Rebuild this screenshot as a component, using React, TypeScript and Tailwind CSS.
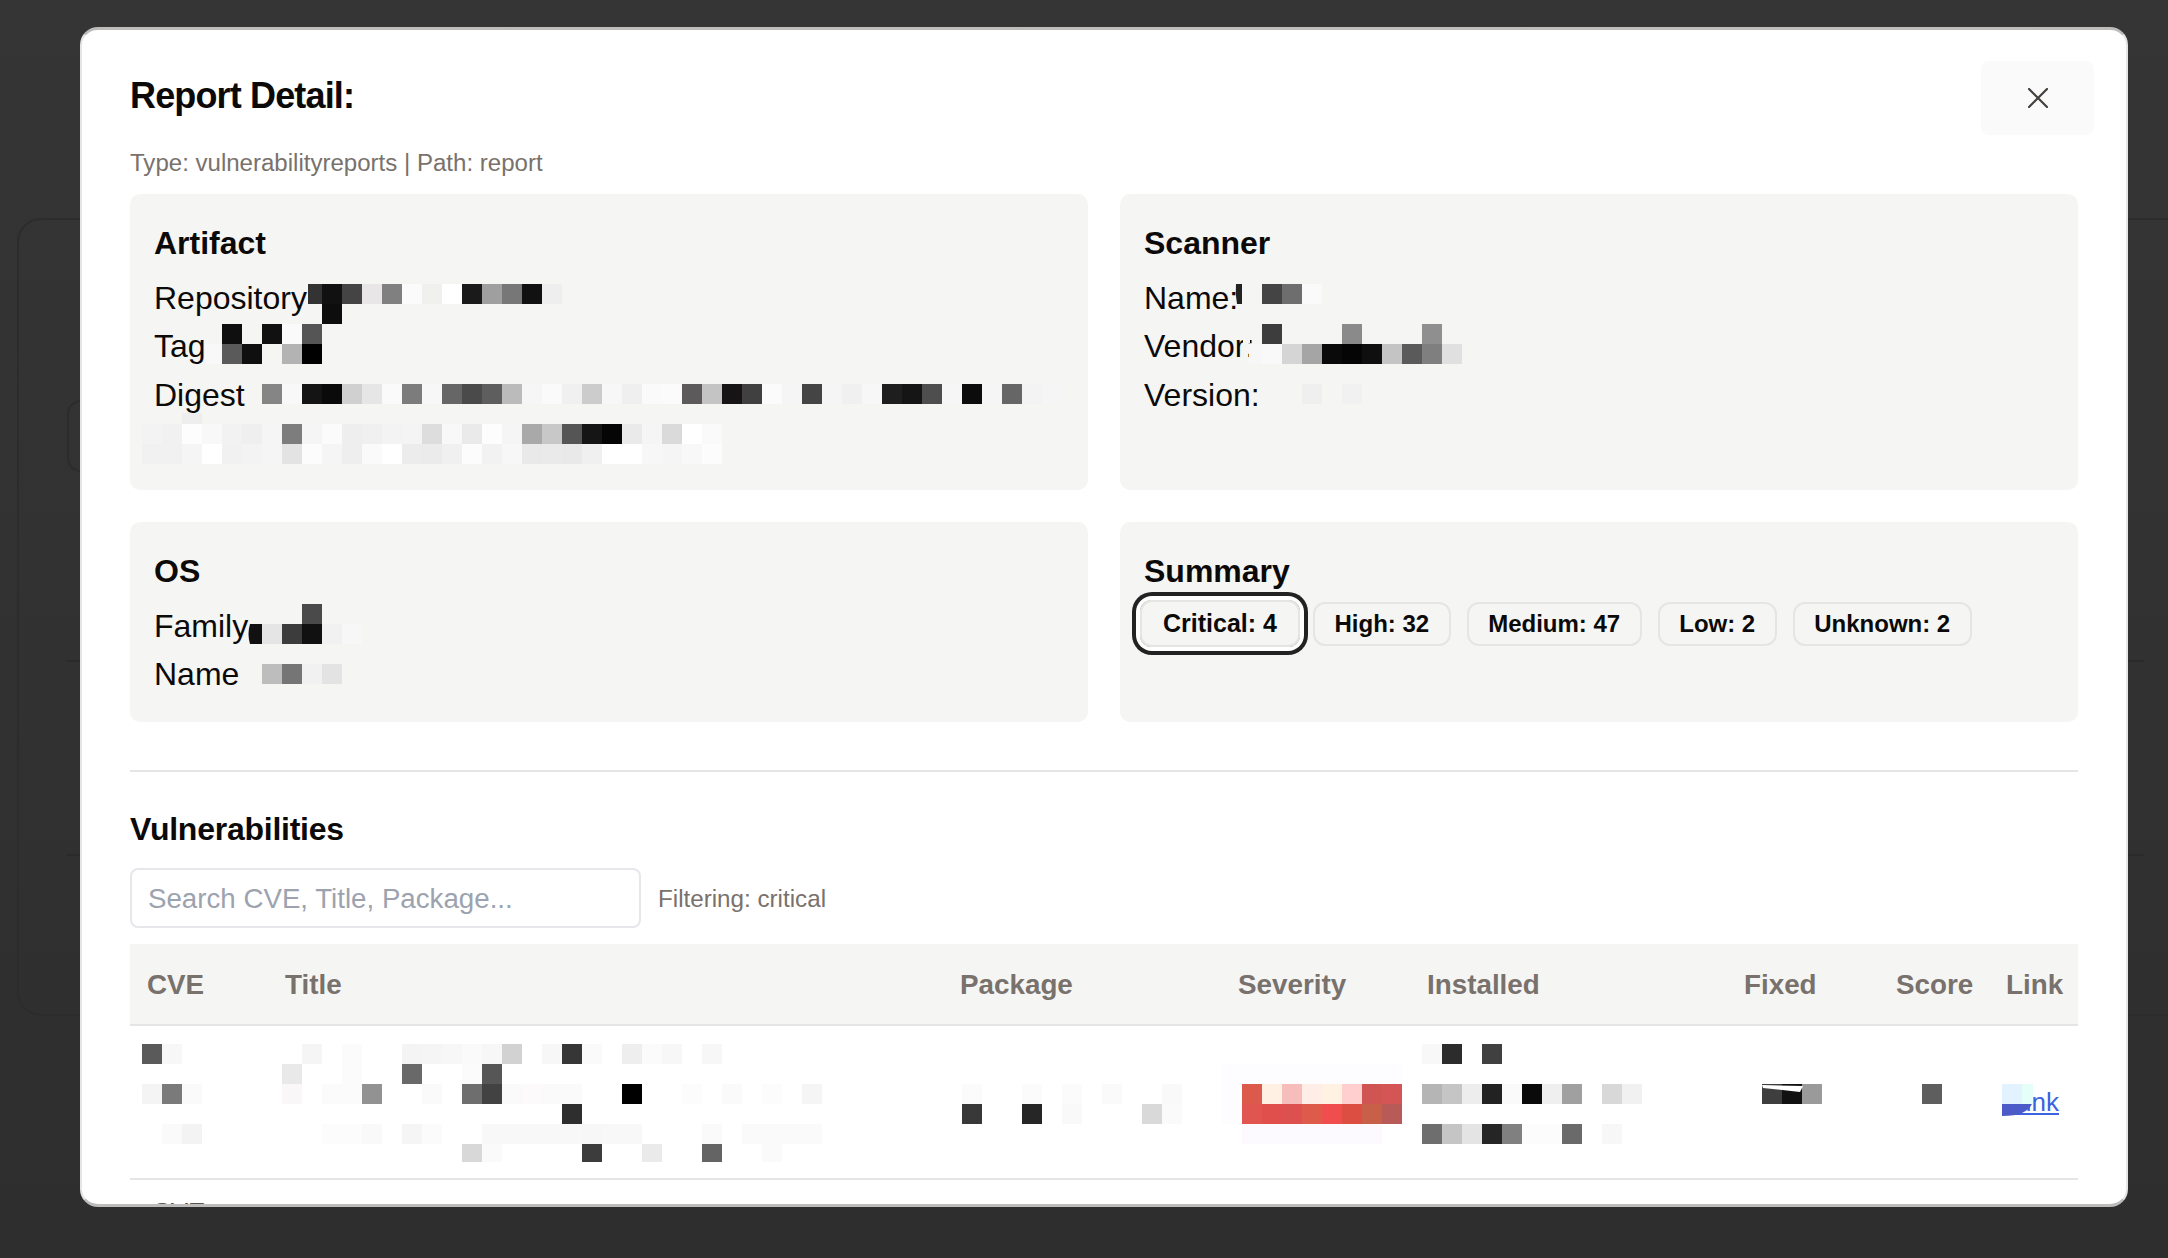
import React from "react";

type Row = [number, Array<[number, string]>];

// Redaction mosaic: 20px tiles lying over the sensitive values.
const mosaic: Row[] = [
  [284, [[322,"#111"],[342,"#444"],[362,"#e8e6e6"],[382,"#808080"],[402,"#fbfbfb"],[422,"#f0f0ef"],[442,"#fff"],[462,"#1a1a1a"],[482,"#9f9f9f"],[502,"#777"],[522,"#111"],[542,"#eee"],
    [1262,"#444"],[1282,"#6e6e6e"],[1302,"#fafafa"]]],
  [304, [[322,"#0d0d0d"]]],
  [324, [[222,"#0f0f0f"],[262,"#111"],[282,"#fafafa"],[302,"#555"],[1262,"#3d3d3d"],[1342,"#8a8a8a"],[1422,"#8f8f8f"]]],
  [344, [[222,"#5a5a5a"],[242,"#0f0f0f"],[282,"#b3b3b3"],[302,"#000"],
    [1262,"#f9f9f9"],[1282,"#d5d5d5"],[1302,"#a5a5a5"],[1322,"#0a0a0a"],[1342,"#050505"],[1362,"#0f0f0f"],[1382,"#c4c4c4"],[1402,"#5a5a5a"],[1422,"#7f7f7f"],[1442,"#e0e0e0"]]],
  [384, [[262,"#858585"],[282,"#f8f8f8"],[302,"#141414"],[322,"#0a0a0a"],[342,"#d0d0d0"],[362,"#e6e6e6"],[382,"#fafafa"],[402,"#7c7c7c"],[422,"#f7f7f7"],[442,"#666"],[462,"#4a4a4a"],[482,"#5e5e5e"],[502,"#bbb"],[522,"#f6f6f6"],[542,"#fafafa"],[562,"#f1f0f0"],[582,"#ccc"],[602,"#f7f7f7"],[622,"#efefef"],[642,"#fafafa"],[662,"#fbfbfb"],[682,"#5c5a5a"],[702,"#c4c4c4"],[722,"#161414"],[742,"#404040"],[762,"#fbfbfb"],[782,"#f5f5f5"],[802,"#444"],[822,"#f5f5f5"],[842,"#f0f0f0"],[862,"#f7f7f7"],[882,"#1e1e1e"],[902,"#151515"],[922,"#4e4e4e"],[942,"#f6f6f6"],[962,"#0c0c0c"],[982,"#f5f5f5"],[1002,"#666"],[1022,"#f3f3f3"],[1042,"#f5f5f5"],
    [1302,"#efefef"],[1342,"#f1f1f1"]]],
  [424, [[142,"#f3f3f3"],[162,"#f1f1f1"],[182,"#fdfdfd"],[202,"#f8f8f8"],[222,"#f2f2f2"],[242,"#f0efef"],[262,"#f5f5f5"],[282,"#7d7d7d"],[302,"#f5f5f5"],[322,"#fbfbfb"],[342,"#eee"],[362,"#f0f0f0"],[382,"#f3f3f3"],[402,"#f4f4f4"],[422,"#ddd"],[442,"#f8f8f8"],[462,"#eaeaea"],[482,"#fdfdfd"],[502,"#f5f5f5"],[522,"#a9a9a9"],[542,"#c8c8c8"],[562,"#555"],[582,"#151515"],[602,"#050505"],[622,"#eaeaea"],[642,"#f5f5f5"],[662,"#dadada"],[682,"#fff"],[702,"#fafafa"]]],
  [444, [[142,"#f1f1f1"],[162,"#f1f1f1"],[182,"#f5f5f5"],[202,"#fff"],[222,"#f1f1f1"],[242,"#f3f3f3"],[262,"#f5f5f5"],[282,"#e3e3e3"],[302,"#fcfcfc"],[322,"#f5f5f5"],[342,"#eee"],[362,"#fafafa"],[382,"#fff"],[402,"#ececec"],[422,"#ebebeb"],[442,"#f0f0f0"],[462,"#fcfcfc"],[482,"#f2f2f2"],[502,"#f7f7f7"],[522,"#e9e9e9"],[542,"#eaeaea"],[562,"#e9e9e9"],[582,"#f0f0f0"],[602,"#fff"],[622,"#fff"],[642,"#f7f7f7"],[662,"#f5f5f5"],[682,"#f8f8f8"],[702,"#fcfcfc"]]],
  [604, [[302,"#4a4a4a"]]],
  [624, [[262,"#e5e5e5"],[282,"#3c3c3c"],[302,"#111"],[322,"#f1f1f1"],[342,"#f7f7f7"]]],
  [664, [[262,"#bdbdbd"],[282,"#757575"],[302,"#f1f1f1"],[322,"#e3e3e3"]]],
  [1044, [[142,"#5a5a5a"],[162,"#f7f7f7"],[302,"#f5f5f5"],[342,"#fbfbfb"],[402,"#f4f4f4"],[422,"#f5f5f5"],[442,"#f7f7f7"],[462,"#fafafa"],[482,"#f7f7f7"],[502,"#d2d2d2"],[542,"#f7f7f7"],[562,"#363636"],[582,"#fafafa"],[622,"#eee"],[642,"#fbfbfb"],[662,"#f7f7f7"],[702,"#f7f7f7"],
    [1422,"#f8f8f8"],[1442,"#2c2c2c"],[1482,"#404040"]]],
  [1064, [[282,"#e9e9e9"],[342,"#fbfbfb"],[402,"#696969"],[462,"#fbfbfb"],[482,"#565656"],
    [1222,"#fdfcff"],[1242,"#fdfcff"],[1262,"#fdfcff"],[1282,"#fdfcff"],[1302,"#fdfcff"],[1322,"#fdfcff"],[1342,"#fdfcff"],[1362,"#fdfcff"],[1382,"#fdfcff"]]],
  [1084, [[142,"#f4f4f4"],[162,"#7a7a7a"],[182,"#fafafa"],[282,"#faf7f8"],[322,"#fbfbfb"],[342,"#fbfbfb"],[362,"#929292"],[422,"#fafafa"],[462,"#6e6e6e"],[482,"#424242"],[502,"#fafafa"],[522,"#fcfafa"],[542,"#fafafa"],[562,"#fafafa"],[622,"#000"],[682,"#fcfcfc"],[722,"#fafafa"],[762,"#fcfcfc"],[802,"#f5f5f5"],[962,"#fbfbfb"],[1022,"#fbfbfb"],[1062,"#fbfbfb"],[1102,"#fafafa"],[1162,"#f9f9f9"],
    [1222,"#fdfcff"],[1242,"#dc5a4c"],[1262,"#fff0e3"],[1282,"#f7bdbb"],[1302,"#ffeee8"],[1322,"#fff2e2"],[1342,"#ffcfcf"],[1362,"#d05451"],[1382,"#d35555"],
    [1422,"#b5b5b5"],[1442,"#c5c5c5"],[1462,"#ededed"],[1482,"#222"],[1502,"#fafafa"],[1522,"#0a0a0a"],[1542,"#efefef"],[1562,"#a0a0a0"],[1602,"#d8d8d8"],[1622,"#f1f1f1"],
    [1762,"#3e3e3e"],[1782,"#111"],[1802,"#9a9a9a"],[1922,"#5e5e5e"],[2002,"#e3f2ff"]]],
  [1104, [[562,"#2e2e2e"],[962,"#383838"],[1022,"#262626"],[1062,"#f9f9f9"],[1142,"#d9d9d9"],[1162,"#fafafa"],
    [1222,"#fdfcff"],[1242,"#e05550"],[1262,"#e04f4b"],[1282,"#dc5050"],[1302,"#de5a4b"],[1322,"#f04e4e"],[1342,"#dc4d42"],[1362,"#c85f48"],[1382,"#b85a58"]]],
  [1124, [[162,"#fafafa"],[182,"#f3f3f3"],[322,"#fcfcfc"],[342,"#fcfcfc"],[362,"#f9f9f9"],[402,"#f5f5f5"],[422,"#fbfbfb"],[482,"#f8f8f8"],[502,"#f8f8f8"],[522,"#f8f8f8"],[542,"#f8f8f8"],[562,"#f8f8f8"],[582,"#f7f7f7"],[602,"#f8f8f8"],[622,"#f8f8f8"],[702,"#fafafa"],[742,"#fafafa"],[762,"#fafafa"],[782,"#fafafa"],[802,"#fafafa"],
    [1242,"#fdfaff"],[1262,"#fdfaff"],[1282,"#fdfaff"],[1302,"#fdfaff"],[1322,"#fdfaff"],[1342,"#fdfaff"],[1362,"#fdfaff"],
    [1422,"#6e6e6e"],[1442,"#c5c5c5"],[1462,"#e4e4e4"],[1482,"#252525"],[1502,"#808080"],[1522,"#fcfcfc"],[1542,"#fcfcfc"],[1562,"#6a6a6a"],[1602,"#f7f7f7"]]],
];

const shortRow: Array<[number, string]> = [[462,"#d8d8d8"],[482,"#fafafa"],[582,"#3c3c3c"],[642,"#eaeaea"],[702,"#646464"],[762,"#fafafa"]];

function Mosaic() {
  return (
    <svg className="absolute left-0 top-0 pointer-events-none" width="2168" height="1258" aria-hidden="true">
      {mosaic.map(([y, cells]) =>
        cells.map(([x, c]) => <rect key={`${x}-${y}`} x={x} y={y} width="20" height="20" fill={c} />)
      )}
      {shortRow.map(([x, c]) => <rect key={x} x={x} y="1144" width="20" height="18" fill={c} />)}
      {/* tiles partly covered by the labels next to them */}
      <rect x="308" y="284" width="14" height="20" fill="#333" />
      <rect x="205" y="344" width="17" height="20" fill="#f8f8f8" />
      <rect x="182" y="413" width="20" height="11" fill="#eee" />
      <path d="M1236 284h6v20h-5q-2-10-1-20z" fill="#222" />
      <rect x="1249" y="344" width="13" height="20" fill="#f7f7f7" />
      <rect x="1243" y="326" width="7" height="17" fill="#f5f5f4" />
      <rect x="1257" y="376" width="5" height="34" fill="#f5f5f4" />
      <path d="M250 624h12v20h-12q-3-10 0-20z" fill="#111" />
      <path d="M1762 1085l41 1-3 6-37-4z" fill="#fff" />
      <rect x="2022" y="1084" width="11" height="20" fill="#e5fff8" />
      <path d="M2002 1104h30q-3 6-10 9q-7 3-20 3z" fill="#4c5bc8" />
    </svg>
  );
}

function Field({ label }: { label: string }) {
  return <div className="text-[32px] leading-[48.5px] text-[#0c0a09]">{label}</div>;
}

function Card({ title, children }: { title: string; children?: React.ReactNode }) {
  return (
    <div className="rounded-[10px] bg-[#f5f5f4] px-6 pt-[25px]">
      <h3 className="text-[32px] font-bold leading-[48px] text-[#0c0a09]">{title}</h3>
      {children}
    </div>
  );
}

const badges = ["High: 32", "Medium: 47", "Low: 2", "Unknown: 2"];
const columns: Array<[string, string]> = [
  ["CVE", "w-[138px]"],
  ["Title", "w-[675px]"],
  ["Package", "w-[278px]"],
  ["Severity", "w-[189px]"],
  ["Installed", "w-[317px]"],
  ["Fixed", "w-[152px]"],
  ["Score", "w-[110px]"],
  ["Link", "w-[89px]"],
];

export default function App() {
  return (
    <div className="relative h-[1258px] w-full overflow-hidden bg-linear-to-b from-[#353535] to-[#2e2e2e] font-['Liberation_Sans',Arial,sans-serif]">
      {/* dimmed page behind the dialog */}
      <div className="ml-[17px] mt-[218px] h-[798px] w-[2300px] rounded-[24px] border-2 border-[#2c2c2c] pl-[48px] pt-[180px]">
        <div className="h-[72px] w-[1900px] rounded-[14px] border-2 border-[#2c2c2c]" />
        <div className="mt-[188px] h-[2px] w-[2077px] bg-[#2a2a2a]" />
        <div className="mt-[192px] h-[2px] w-[2077px] bg-[#2a2a2a]" />
      </div>

      {/* dialog */}
      <div className="absolute left-[80px] top-[27px] h-[1180px] w-[2048px] overflow-hidden rounded-[18px] border-x-2 border-y-[3px] border-x-[#e7e5e4] border-y-[#bdbcbb] bg-white px-[48px] pt-[39px]">
        <h2 className="text-[36px] font-bold leading-[54px] tracking-[-0.85px] text-[#0c0a09]">Report Detail:</h2>
        <p className="mt-[22px] text-[24.05px] leading-[36px] text-[#78716c]">Type: vulnerabilityreports | Path: report</p>

        <button className="absolute right-[32px] top-[31px] flex h-[74px] w-[113px] items-center justify-center rounded-[8px] bg-[#fafafa] text-[#44403c]">
          <svg width="20" height="20" viewBox="0 0 20 20" fill="none" stroke="currentColor" strokeWidth="2.2" strokeLinecap="round">
            <path d="M1 1l18 18M19 1L1 19" />
          </svg>
        </button>

        <div className="mt-[13px] grid grid-cols-2 grid-rows-[296px_200px] gap-[32px]">
          <Card title="Artifact">
            <div className="mt-[6.5px]">
              <Field label="Repository" />
              <Field label="Tag" />
              <Field label="Digest" />
            </div>
          </Card>
          <Card title="Scanner">
            <div className="mt-[6.5px]">
              <Field label="Name:" />
              <Field label="Vendor:" />
              <Field label="Version:" />
            </div>
          </Card>
          <Card title="OS">
            <div className="mt-[6.5px]">
              <Field label="Family" />
              <Field label="Name" />
            </div>
          </Card>
          <Card title="Summary">
            <div className="-ml-[4px] mt-[5px] flex items-center gap-[16px] text-[24px] font-bold text-[#0c0a09]">
              <span className="-mr-[3px] flex h-[47px] w-[160px] items-center justify-center rounded-[12px] border-2 border-[#e7e5e4] text-[25px] shadow-[0_0_0_4px_#fff,0_0_0_8px_#222]">
                Critical: 4
              </span>
              {badges.map((b) => (
                <span key={b} className="flex h-[44px] items-center rounded-[12px] border-2 border-[#e7e5e4] px-[19.5px]">
                  {b}
                </span>
              ))}
            </div>
          </Card>
        </div>

        <hr className="mt-[48px] border-t-2 border-[#e7e5e4]" />

        <h3 className="mt-[33px] text-[32px] font-bold leading-[48px] tracking-[-0.25px] text-[#0c0a09]">Vulnerabilities</h3>

        <div className="mt-[15px] flex items-center">
          <input
            readOnly
            placeholder="Search CVE, Title, Package..."
            className="h-[60px] w-[511px] rounded-[8px] border-2 border-[#e5e7eb] px-4 pt-[2px] text-[27.7px] outline-none placeholder:text-[#9ca3af]"
          />
          <span className="ml-[17px] mt-[2px] text-[24.2px] text-[#78716c]">Filtering: critical</span>
        </div>

        <table className="mt-[16px] w-full table-fixed border-collapse">
          <thead>
            <tr className="h-[81px] border-b-2 border-[#e7e5e4] bg-[#f5f5f4]">
              {columns.map(([name, w]) => (
                <th key={name} className={`${w} pl-[17px] pt-[2px] text-left text-[27.8px] font-bold text-[#78716c]`}>
                  {name}
                </th>
              ))}
            </tr>
          </thead>
          <tbody>
            <tr className="h-[154px] border-b-2 border-[#e7e5e4]">
              <td colSpan={7} />
              <td className="pr-[19px] text-right text-[26px]">
                <a className="text-[#3b62e0] underline">Link</a>
              </td>
            </tr>
            <tr>
              <td className="pl-[22px] pt-[17px] align-top text-[26px] leading-[30px] text-[#57534e]">CVE</td>
            </tr>
          </tbody>
        </table>
      </div>

      <Mosaic />
    </div>
  );
}
